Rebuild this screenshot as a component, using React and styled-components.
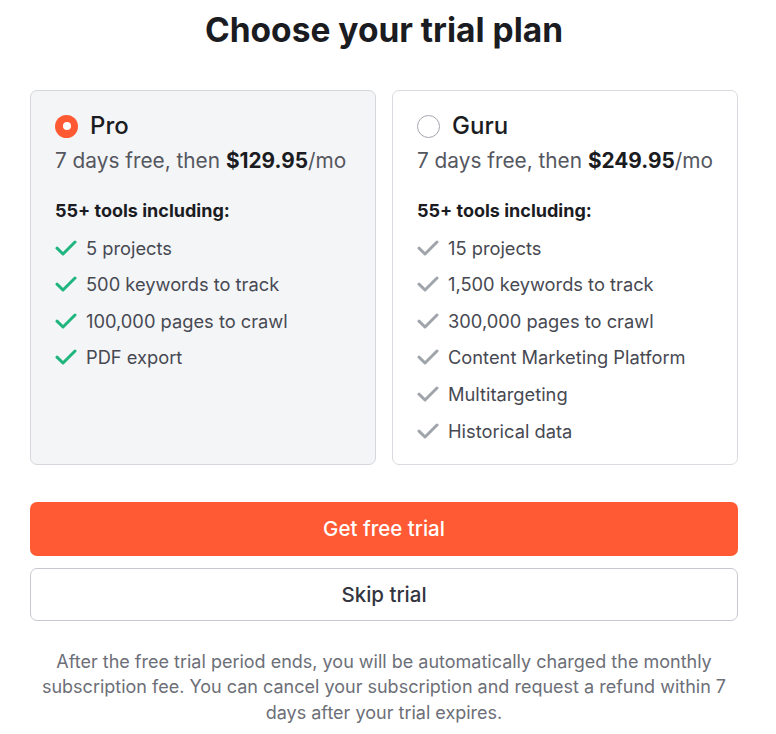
import React from "react";
import styled, { createGlobalStyle } from "styled-components";

const Global = createGlobalStyle`
  html, body { margin: 0; padding: 0; background: #ffffff; }
  body { font-family: Inter, "Noto Sans", "Liberation Sans", sans-serif; -webkit-font-smoothing: antialiased; }
  * { box-sizing: border-box; }
`;

const Page = styled.div`
  width: 776px;
  padding: 8px 38px 0 30px;
  display: flex;
  flex-direction: column;
`;

const Title = styled.h1`
  margin: 0;
  text-align: center;
  font-size: 33.5px;
  line-height: 44px;
  font-weight: 700;
  color: #1b1c22;
`;

const Plans = styled.div`
  margin-top: 38px;
  display: grid;
  grid-template-columns: 1fr 1fr;
  gap: 16px;
`;

const Card = styled.div`
  border: 1px solid ${(p) => (p.$selected ? "#d5d7dc" : "#d9dbe0")};
  background: ${(p) => (p.$selected ? "#f4f5f7" : "#ffffff")};
  border-radius: 7px;
  padding: 21px 20px 21px 24px;
  display: flex;
  flex-direction: column;
`;

const PlanHead = styled.div`
  display: flex;
  align-items: center;
  gap: 12px;
  height: 28px;
`;

const Radio = styled.span`
  width: 23px;
  height: 23px;
  border-radius: 50%;
  flex: none;
  background: ${(p) => (p.$on ? "#ff5a33" : "#ffffff")};
  border: ${(p) => (p.$on ? "none" : "1.5px solid #a3a6ad")};
  display: flex;
  align-items: center;
  justify-content: center;
  &::after {
    content: "";
    display: ${(p) => (p.$on ? "block" : "none")};
    width: 8px;
    height: 8px;
    border-radius: 50%;
    background: #ffffff;
  }
`;

const PlanName = styled.span`
  font-size: 24px;
  line-height: 28px;
  color: #1b1c22;
  font-weight: 500;
`;

const Price = styled.div`
  margin-top: 7px;
  font-size: 20.8px;
  line-height: 28px;
  color: #55575f;
  b { color: #1b1c22; font-weight: 700; }
`;

const ToolsHead = styled.div`
  margin-top: 24px;
  font-size: 18px;
  line-height: 24px;
  font-weight: 700;
  color: #1b1c22;
`;

const List = styled.ul`
  list-style: none;
  margin: 12.6px 0 0;
  padding: 0;
  display: flex;
  flex-direction: column;
  gap: 12.6px;
`;

const Item = styled.li`
  display: flex;
  align-items: center;
  gap: 9px;
  font-size: 18.3px;
  line-height: 24px;
  color: #474952;
  white-space: nowrap;
  svg { flex: none; }
`;

const Buttons = styled.div`
  margin-top: 37px;
  display: flex;
  flex-direction: column;
  gap: 12px;
`;

const Button = styled.button`
  width: 100%;
  height: ${(p) => (p.$primary ? "54px" : "53px")};
  border-radius: 7px;
  border: ${(p) => (p.$primary ? "none" : "1px solid #c6c9cf")};
  background: ${(p) => (p.$primary ? "#ff5a33" : "#ffffff")};
  color: ${(p) => (p.$primary ? "#ffffff" : "#333540")};
  font-family: inherit;
  font-size: 20.5px;
  font-weight: 500;
  cursor: pointer;
`;

const Note = styled.p`
  margin: 28px 0 0;
  text-align: center;
  font-size: 18px;
  line-height: 25.5px;
  color: #6d6f78;
`;

const Check = ({ color }) => (
  <svg width="22" height="16" viewBox="0 0 22 16" aria-hidden="true">
    <path
      d="M2 8.2 L8 14 L20 2"
      fill="none"
      stroke={color}
      strokeWidth="3"
      strokeLinecap="round"
      strokeLinejoin="round"
    />
  </svg>
);

const plans = [
  {
    name: "Pro",
    price: "$129.95",
    selected: true,
    items: ["5 projects", "500 keywords to track", "100,000 pages to crawl", "PDF export"],
  },
  {
    name: "Guru",
    price: "$249.95",
    selected: false,
    items: [
      "15 projects",
      "1,500 keywords to track",
      "300,000 pages to crawl",
      "Content Marketing Platform",
      "Multitargeting",
      "Historical data",
    ],
  },
];

export default function App() {
  return (
    <>
      <Global />
      <Page>
        <Title>Choose your trial plan</Title>
        <Plans>
          {plans.map((p) => (
            <Card key={p.name} $selected={p.selected}>
              <PlanHead>
                <Radio $on={p.selected} />
                <PlanName>{p.name}</PlanName>
              </PlanHead>
              <Price>
                7 days free, then <b>{p.price}</b>/mo
              </Price>
              <ToolsHead>55+ tools including:</ToolsHead>
              <List>
                {p.items.map((it) => (
                  <Item key={it}>
                    <Check color={p.selected ? "#1fb57e" : "#a0a4ab"} />
                    {it}
                  </Item>
                ))}
              </List>
            </Card>
          ))}
        </Plans>
        <Buttons>
          <Button $primary>Get free trial</Button>
          <Button>Skip trial</Button>
        </Buttons>
        <Note>
          After the free trial period ends, you will be automatically charged the monthly
          subscription fee. You can cancel your subscription and request a refund within 7
          days after your trial expires.
        </Note>
      </Page>
    </>
  );
}
